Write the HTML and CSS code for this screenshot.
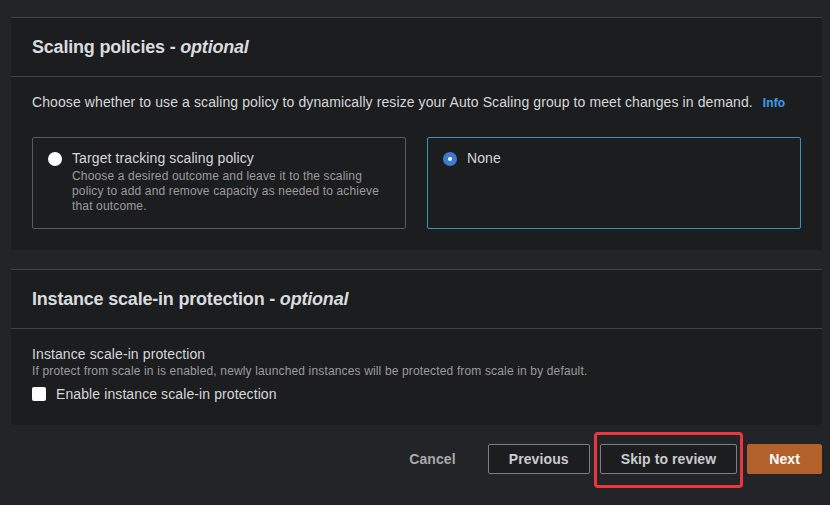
FILE: index.html
```html
<!DOCTYPE html>
<html lang="en">
<head>
<meta charset="utf-8">
<title>Scaling policies</title>
<link rel="stylesheet" href="styles.css">
</head>
<body>
<main class="page">
  <section class="card">
    <header class="card-header">
      <h2 class="card-title">Scaling policies - <em>optional</em></h2>
    </header>
    <div class="card-body">
      <p class="intro">Choose whether to use a scaling policy to dynamically resize your Auto Scaling group to meet changes in demand. <a class="info" href="#">Info</a></p>
      <div class="tiles">
        <label class="tile">
          <span class="radio"></span>
          <span class="tile-text">
            <span class="tile-label">Target tracking scaling policy</span>
            <span class="tile-desc">Choose a desired outcome and leave it to the scaling policy to add and remove capacity as needed to achieve that outcome.</span>
          </span>
        </label>
        <label class="tile tile-selected">
          <span class="radio radio-checked"></span>
          <span class="tile-text">
            <span class="tile-label">None</span>
          </span>
        </label>
      </div>
    </div>
  </section>

  <section class="card card-second">
    <header class="card-header">
      <h2 class="card-title">Instance scale-in protection - <em>optional</em></h2>
    </header>
    <div class="card-body card-body-form">
      <div class="field-label">Instance scale-in protection</div>
      <div class="field-desc">If protect from scale in is enabled, newly launched instances will be protected from scale in by default.</div>
      <label class="check-row">
        <span class="checkbox"></span>
        <span class="check-label">Enable instance scale-in protection</span>
      </label>
    </div>
  </section>

  <div class="actions">
    <button class="btn btn-link">Cancel</button>
    <button class="btn btn-normal">Previous</button>
    <span class="highlight"><button class="btn btn-normal">Skip to review</button></span>
    <button class="btn btn-primary">Next</button>
  </div>
</main>
</body>
</html>
```

FILE: styles.css
```css
* { box-sizing: border-box; }

html, body {
  margin: 0;
  padding: 0;
  background: #232427;
}

body {
  font-family: "Liberation Sans", Arial, sans-serif;
  color: #d5d8db;
  height: 505px;
  overflow: hidden;
  letter-spacing: 0.1px;
}

.page {
  width: 811px;
  margin-left: 11px;
  padding-top: 17px;
}

.card {
  background: #1c1d1f;
  border-top: 1px solid #414346;
}

.card-second {
  margin-top: 19px;
}

.card-header {
  padding: 18px 21px;
  border-bottom: 1px solid #414346;
}

.card-title {
  margin: 0;
  font-size: 18px;
  line-height: 22px;
  font-weight: bold;
  color: #d9dcdf;
  letter-spacing: -0.2px;
}

.card-title em {
  font-style: italic;
}

.card-body {
  padding: 15px 21px 21px;
}

.intro {
  margin: 0;
  font-size: 14px;
  line-height: 20px;
  color: #d5d8db;
}

.info {
  margin-left: 6px;
  color: #3d9ef0;
  font-weight: bold;
  font-size: 12px;
  text-decoration: none;
}

.tiles {
  margin-top: 24px;
  display: flex;
  gap: 21px;
}

.tile {
  flex: 1;
  display: flex;
  align-items: flex-start;
  gap: 10px;
  padding: 10px 16px 14px 15px;
  border: 1px solid #56595d;
  border-radius: 2px;
  min-height: 92px;
}

.tile-selected {
  border-color: #3a93bd;
}

.radio {
  flex: none;
  width: 14px;
  height: 14px;
  margin-top: 4px;
  border-radius: 50%;
  background: #ffffff;
}

.radio-checked {
  border: 5px solid #3b7ccc;
}

.tile-text {
  display: flex;
  flex-direction: column;
}

.tile-label {
  font-size: 14px;
  line-height: 20px;
  color: #d5d8db;
}

.tile-desc {
  margin-top: 1px;
  max-width: 318px;
  font-size: 12px;
  line-height: 15px;
  color: #9a9c9e;
  letter-spacing: 0.15px;
}

.card-body-form {
  padding-top: 16px;
}

.field-label {
  font-size: 14px;
  line-height: 18px;
  color: #d5d8db;
}

.field-desc {
  font-size: 12px;
  line-height: 16px;
  color: #9a9c9e;
  letter-spacing: 0.15px;
}

.check-row {
  margin-top: 5px;
  display: flex;
  align-items: center;
  gap: 10px;
  height: 20px;
}

.checkbox {
  width: 14px;
  height: 14px;
  background: #ffffff;
  border-radius: 2px;
}

.check-label {
  font-size: 14px;
  line-height: 20px;
  color: #d5d8db;
}

.actions {
  margin-top: 19px;
  display: flex;
  justify-content: flex-end;
  align-items: center;
  gap: 10px;
}

.btn {
  font-family: "Liberation Sans", Arial, sans-serif;
  font-size: 14px;
  font-weight: bold;
  letter-spacing: 0.1px;
  height: 30px;
  line-height: 28px;
  padding: 0 20px;
  border: 1px solid transparent;
  border-radius: 2px;
  background: transparent;
  color: #c9cccf;
  cursor: pointer;
}

.btn-link {
  margin-right: 1px;
  color: #a7aaad;
}

.btn-normal {
  border-color: #7b7f84;
  background: #1c1d1f;
  color: #c9cccf;
}

.btn-primary {
  background: #b2612b;
  border-color: #b2612b;
  color: #ffffff;
  padding: 0 21px;
}

.highlight {
  position: relative;
  display: inline-flex;
}

.highlight::after {
  content: "";
  position: absolute;
  left: -6px;
  right: -6px;
  top: -12px;
  bottom: -14px;
  border: 3px solid #e8383d;
  border-radius: 4px;
  pointer-events: none;
}
```
